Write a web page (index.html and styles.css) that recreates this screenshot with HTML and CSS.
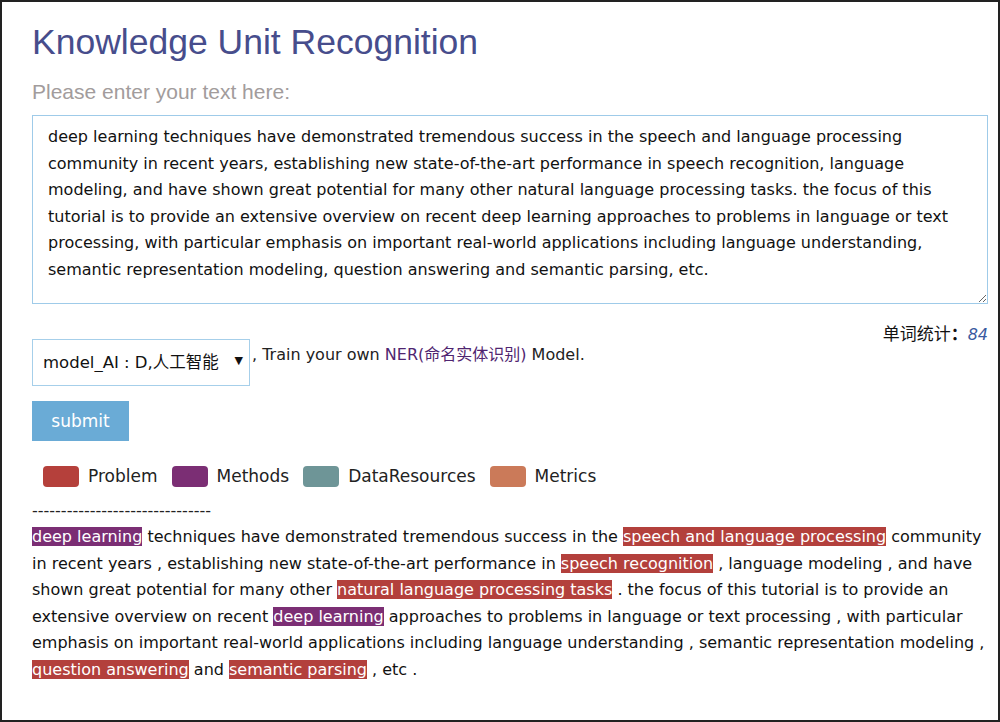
FILE: index.html
```html
<!DOCTYPE html>
<html lang="en">
<head>
    <meta charset="UTF-8">
    <title>Knowledge Unit Recognition</title>
    <link rel="stylesheet" href="styles.css">
</head>
<body>
    <section class="frame">
        <h1 class="title">Knowledge Unit Recognition</h1>
        <p class="prompt">Please enter your text here:</p>
        <textarea class="input-text">deep learning techniques have demonstrated tremendous success in the speech and language processing community in recent years, establishing new state-of-the-art performance in speech recognition, language modeling, and have shown great potential for many other natural language processing tasks. the focus of this tutorial is to provide an extensive overview on recent deep learning approaches to problems in language or text processing, with particular emphasis on important real-world applications including language understanding, semantic representation modeling, question answering and semantic parsing, etc.</textarea>
        <div class="count">单词统计<b>：</b><span class="count-num">84</span></div>
        <div class="model-row">
            <span class="select-wrap">
                <select class="model-select">
                    <option>model_AI : D,人工智能</option>
                </select>
            </span>
            <span class="train">, Train your own <a class="ner" href="#">NER(命名实体识别)</a> Model.</span>
        </div>
        <button class="submit">submit</button>
        <div class="legend">
            <span class="legend-item"><i class="swatch problem"></i>Problem</span>
            <span class="legend-item"><i class="swatch methods"></i>Methods</span>
            <span class="legend-item"><i class="swatch data"></i>DataResources</span>
            <span class="legend-item"><i class="swatch metrics"></i>Metrics</span>
        </div>
        <div class="dashes">-------------------------------</div>
        <p class="result">
            <span class="tag methods">deep learning</span> techniques have demonstrated tremendous success in the <span class="tag problem">speech and language processing</span> community in recent years , establishing new state-of-the-art performance in <span class="tag problem">speech recognition</span> , language modeling , and have shown great potential for many other <span class="tag problem">natural language processing tasks</span> . the focus of this tutorial is to provide an extensive overview on recent <span class="tag methods">deep learning</span> approaches to problems in language or text processing , with particular emphasis on important real-world applications including language understanding , semantic representation modeling , <span class="tag problem">question answering</span> and <span class="tag problem">semantic parsing</span> , etc .
        </p>
    </section>
</body>
</html>
```

FILE: styles.css
```css
*{
    margin: 0;
    padding: 0;
    box-sizing: border-box;
}
body{
    font-family: "DejaVu Sans", Tahoma, "Noto Sans CJK SC", sans-serif;
    background: #fff;
}
.frame{
    width: 1000px;
    height: 722px;
    border: 2px solid #222;
    padding: 20px 10px 0 30px;
    overflow: hidden;
}
.title{
    font-family: "Liberation Sans", Arial, sans-serif;
    font-size: 35.5px;
    font-weight: normal;
    color: #474d8c;
    line-height: 40px;
}
.prompt{
    margin-top: 18px;
    font-family: "Liberation Sans", Arial, sans-serif;
    font-size: 21px;
    color: #a29c9c;
    line-height: 24px;
}
.input-text{
    display: block;
    margin-top: 11px;
    width: 956px;
    height: 189px;
    border: 1px solid #9fcbe9;
    padding: 8px 15px;
    font-family: "DejaVu Sans", Tahoma, sans-serif;
    font-size: 16px;
    line-height: 26.5px;
    color: #111;
    outline: none;
}
.count{
    text-align: right;
    width: 956px;
    margin-top: 18px;
    font-size: 17px;
    font-family: "Noto Sans CJK SC", sans-serif;
    color: #111;
    line-height: 22px;
}
.count b{
    font-weight: bold;
}
.count-num{
    font-style: italic;
    color: #3a5aa0;
    font-family: "DejaVu Sans", sans-serif;
    font-size: 16px;
}
.model-row{
    display: flex;
    align-items: flex-start;
    margin-top: -7px;
}
.select-wrap{
    position: relative;
    display: inline-block;
}
.select-wrap::after{
    content: "\25BC";
    position: absolute;
    right: 7px;
    top: 15px;
    font-size: 11px;
    color: #111;
    pointer-events: none;
}
.model-select{
    appearance: none;
    -webkit-appearance: none;
    width: 218px;
    height: 47px;
    border: 1px solid #a6cfea;
    background: #fff;
    padding: 0 0 0 10px;
    font-family: "DejaVu Sans", "Noto Sans CJK SC", sans-serif;
    font-size: 16.5px;
    color: #111;
    border-radius: 0;
}
.train{
    font-size: 16px;
    color: #222;
    margin-top: 2px;
    margin-left: 2px;
}
.ner{
    color: #4f2570;
    text-decoration: none;
}
.submit{
    display: block;
    margin-top: 15px;
    width: 97px;
    height: 40px;
    border: none;
    background: #6aabd6;
    color: #fff;
    font-family: "DejaVu Sans", sans-serif;
    font-size: 17px;
}
.legend{
    display: flex;
    gap: 14px;
    margin-top: 24px;
    padding-left: 11px;
    font-family: "DejaVu Sans", sans-serif;
    font-size: 17px;
    color: #222;
    line-height: 22px;
}
.legend-item{
    display: flex;
    align-items: center;
}
.swatch{
    display: inline-block;
    width: 36px;
    height: 21px;
    border-radius: 4px;
    margin-right: 9px;
}
.swatch.problem{ background: #b5403b; }
.swatch.methods{ background: #7b2e74; }
.swatch.data{ background: #6e9597; }
.swatch.metrics{ background: #cb7a59; }
.dashes{
    margin-top: 17px;
    font-size: 16px;
    color: #222;
    line-height: 14px;
}
.result{
    margin-top: 6px;
    font-size: 16px;
    line-height: 26.5px;
    color: #111;
    width: 960px;
}
.tag{
    color: #fff;
}
.tag.problem{ background: #b3403c; }
.tag.methods{ background: #7b2e74; }
```
